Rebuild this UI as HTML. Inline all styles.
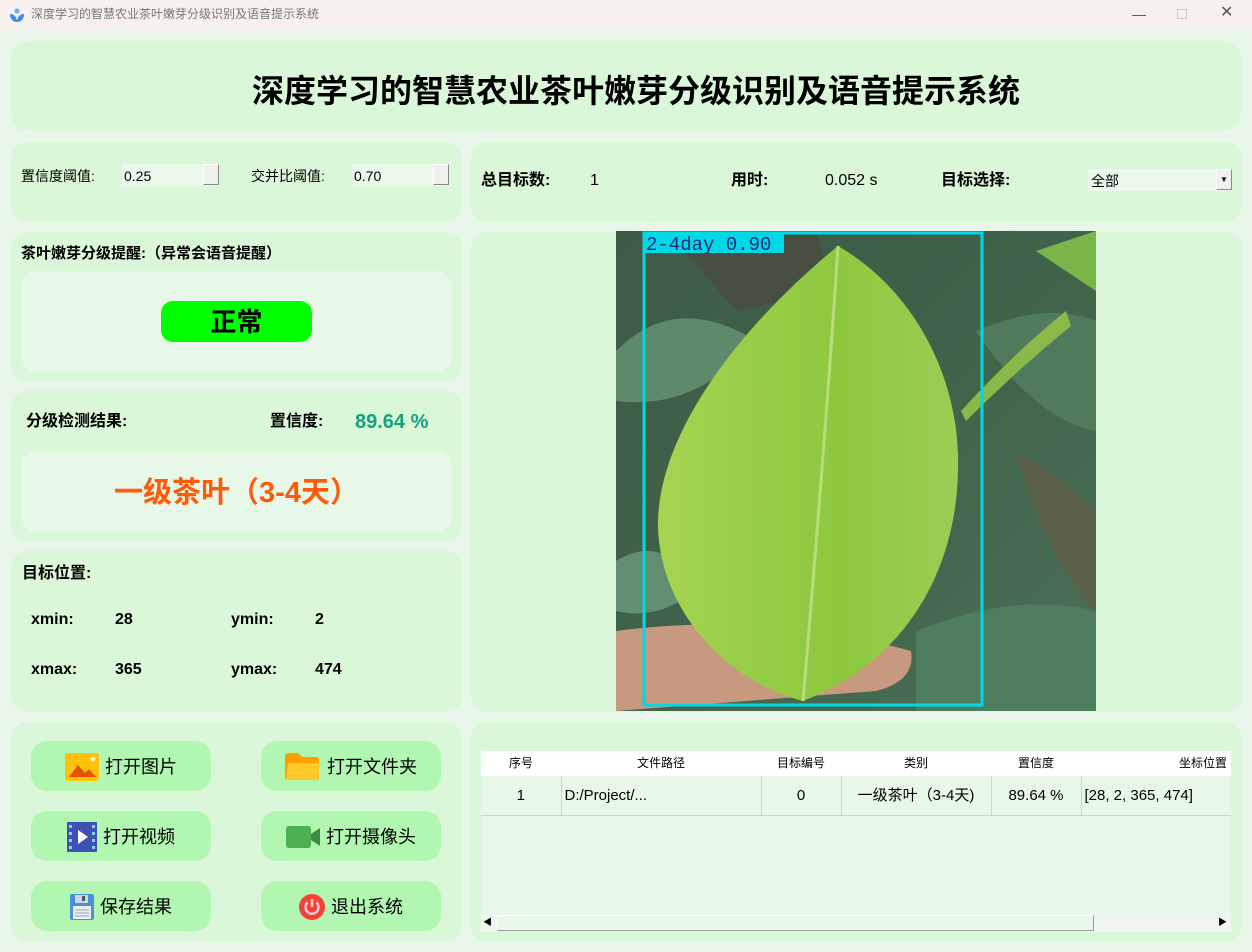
<!DOCTYPE html>
<html><head><meta charset="utf-8"><style>
*{box-sizing:border-box;margin:0;padding:0}
body{width:1252px;height:952px;background:#e9f7ea;font-family:"Liberation Sans","Noto Sans CJK SC",sans-serif;position:relative;overflow:hidden;line-height:1.15}
.a{position:absolute}
.p{position:absolute;background:#dbf7d9;border-radius:16px}
.in{position:absolute;background:#e8f8e8;border-radius:16px}
.b{font-weight:bold}
.btn{position:absolute;width:180px;height:50px;background:#b1f7b1;border-radius:16px;font-size:18px;display:flex;align-items:center;justify-content:center;gap:6px;color:#000;padding-top:2px}
.spin{position:absolute;width:97px;height:22px;background:#eaf9ea;font-size:14px;padding:4px 2px 0}
.spin i{position:absolute;right:0;top:0;width:16px;height:21px;border:1px solid #888;border-top-color:#fff;border-left-color:#fff;background:#f0f0f0}
th,td{font-weight:normal}
</style></head><body>
<div class="a" style="left:0;top:0;width:1252px;height:30px;background:#f6f1ef"></div>
<svg class="a" style="left:9px;top:7px" width="16" height="16" viewBox="0 0 16 16"><path d="M8 15C4 15 1 12 1 7c4 0 7 3 7 8z" fill="#3b8de0"/><path d="M8 15c4 0 7-3 7-8-4 0-7 3-7 8z" fill="#3b8de0"/><circle cx="8" cy="4" r="2.5" fill="#6ab0f0"/></svg>
<div class="a" style="left:31px;top:8px;font-size:12px;color:#777">深度学习的智慧农业茶叶嫩芽分级识别及语音提示系统</div>
<div class="a" style="left:1132px;top:6px;font-size:14px;color:#555">—</div>
<div class="a" style="left:1177px;top:9px;width:10px;height:10px;border:1px solid #ccc"></div>
<div class="a" style="left:1220px;top:4px;font-size:16px;color:#555">✕</div>

<div class="p" style="left:11px;top:41px;width:1230px;height:90px"></div>
<div class="a b" style="left:11px;width:1250px;top:73px;text-align:center;font-size:32px">深度学习的智慧农业茶叶嫩芽分级识别及语音提示系统</div>

<div class="p" style="left:11px;top:142px;width:451px;height:80px"></div>
<div class="a" style="left:21px;top:168px;font-size:14px">置信度阈值:</div>
<div class="spin" style="left:122px;top:164px">0.25<i></i></div>
<div class="a" style="left:251px;top:168px;font-size:14px">交并比阈值:</div>
<div class="spin" style="left:352px;top:164px">0.70<i></i></div>

<div class="p" style="left:471px;top:142px;width:771px;height:80px"></div>
<div class="a b" style="left:481px;top:172px;font-size:16px">总目标数:</div>
<div class="a" style="left:590px;top:172px;font-size:16px">1</div>
<div class="a b" style="left:731px;top:172px;font-size:16px">用时:</div>
<div class="a" style="left:825px;top:172px;font-size:16px">0.052 s</div>
<div class="a b" style="left:941px;top:172px;font-size:16px">目标选择:</div>
<div class="a" style="left:1088px;top:169px;width:144px;height:22px;background:#eaf9ea;font-size:14px;padding:4px 3px 0">全部<i style="position:absolute;right:0;top:0;width:16px;height:21px;border:1px solid #888;border-top-color:#fff;border-left-color:#fff;background:#f0f0f0;font-size:8px;text-align:center;line-height:20px;font-style:normal">▼</i></div>

<div class="p" style="left:11px;top:232px;width:451px;height:150px"></div>
<div class="a b" style="left:21px;top:245px;font-size:15px">茶叶嫩芽分级提醒:（异常会语音提醒）</div>
<div class="in" style="left:21px;top:271px;width:431px;height:101px"></div>
<div class="a b" style="left:161px;top:301px;width:151px;height:41px;background:#00ff00;border-radius:12px;text-align:center;font-size:26px;line-height:43px">正常</div>

<div class="p" style="left:11px;top:391px;width:451px;height:151px"></div>
<div class="a b" style="left:26px;top:413px;font-size:16px">分级检测结果:</div>
<div class="a b" style="left:270px;top:413px;font-size:16px">置信度:</div>
<div class="a b" style="left:355px;top:411px;font-size:20px;color:#13a27a">89.64 %</div>
<div class="in" style="left:21px;top:451px;width:431px;height:81px"></div>
<div class="a b" style="left:21px;width:431px;top:477px;text-align:center;font-size:29px;color:#ff5a0a">一级茶叶（3-4天）</div>

<div class="p" style="left:11px;top:551px;width:451px;height:161px"></div>
<div class="a b" style="left:22px;top:565px;font-size:16px">目标位置:</div>
<div class="a b" style="left:31px;top:611px;font-size:16px">xmin:</div>
<div class="a b" style="left:115px;top:611px;font-size:16px">28</div>
<div class="a b" style="left:231px;top:611px;font-size:16px">ymin:</div>
<div class="a b" style="left:315px;top:611px;font-size:16px">2</div>
<div class="a b" style="left:31px;top:661px;font-size:16px">xmax:</div>
<div class="a b" style="left:115px;top:661px;font-size:16px">365</div>
<div class="a b" style="left:231px;top:661px;font-size:16px">ymax:</div>
<div class="a b" style="left:315px;top:661px;font-size:16px">474</div>

<div class="p" style="left:471px;top:232px;width:771px;height:480px"></div>
<svg class="a" style="left:616px;top:231px" width="480" height="480" viewBox="0 0 480 480">
<defs><linearGradient id="bg" x1="0" y1="0" x2="1" y2="1"><stop offset="0" stop-color="#3d5a45"/><stop offset=".5" stop-color="#41634a"/><stop offset="1" stop-color="#4a7058"/></linearGradient>
<linearGradient id="lf" x1="0" y1="0" x2="1" y2="0"><stop offset="0" stop-color="#a6d451"/><stop offset=".6" stop-color="#8cc83e"/><stop offset="1" stop-color="#9ccd55"/></linearGradient></defs>
<rect width="480" height="480" fill="url(#bg)"/>
<path d="M60 10 L200 0 L220 60 L120 80Z" fill="#4e4640" opacity=".6"/>
<path d="M0 120 Q60 60 140 110 Q80 180 0 170Z" fill="#5c8a6a"/>
<path d="M0 330 Q50 300 80 360 Q40 390 0 380Z" fill="#628f72"/>
<path d="M300 400 Q400 360 480 380 L480 480 L300 480Z" fill="#4f7d60"/>
<path d="M360 100 Q430 70 480 90 L480 200 Q420 190 360 100Z" fill="#4f7a5c"/>
<path d="M400 220 Q450 250 480 280 L480 380 Q430 330 400 220Z" fill="#6b5a48" opacity=".6"/>
<path d="M420 20 L480 0 L480 60Z" fill="#7ab64a"/>
<path d="M345 180 Q400 120 450 80 L455 95 Q400 140 350 190Z" fill="#8ab84a"/>
<path d="M0 400 Q150 380 295 420 Q300 450 260 460 L0 480Z" fill="#c79a80"/>
<path d="M222 15 C300 60 345 150 342 240 C340 340 290 430 187 470 C110 450 45 380 42 297 C40 200 130 90 222 15Z" fill="url(#lf)"/>
<path d="M222 15 Q210 200 187 470" stroke="#b8dc7a" stroke-width="3" fill="none"/>
<rect x="28" y="2" width="338" height="472" fill="none" stroke="#00d8e6" stroke-width="3"/>
<rect x="28" y="2" width="140" height="20" fill="#00d8e6"/>
<text x="30" y="19" font-family="Liberation Mono,monospace" font-size="19" fill="#1a2a80">2-4day 0.90</text>
</svg>

<div class="p" style="left:11px;top:722px;width:451px;height:220px"></div>
<div class="btn" style="left:31px;top:741px"><svg width="34" height="28" viewBox="0 0 34 28"><rect width="34" height="28" rx="3" fill="#ffc107"/><path d="M4 24 L13 12 L20 20 L24 16 L31 24Z" fill="#e65100"/><circle cx="28" cy="6" r="2.5" fill="#fff3c0"/></svg>打开图片</div>
<div class="btn" style="left:261px;top:741px"><svg width="36" height="28" viewBox="0 0 36 28"><path d="M0 3 Q0 0 3 0 H13 L17 4 H32 Q34 4 34 7 V26 H0Z" fill="#ffa000"/><path d="M3 10 H35 L33 27 H1Z" fill="#ffca28"/></svg>打开文件夹</div>
<div class="btn" style="left:31px;top:811px"><svg width="30" height="30" viewBox="0 0 30 30"><rect width="30" height="30" fill="#3f51b5"/><g fill="#8bd4e8"><rect x="2" y="3" width="3" height="3"/><rect x="2" y="10" width="3" height="3"/><rect x="2" y="17" width="3" height="3"/><rect x="2" y="24" width="3" height="3"/><rect x="25" y="3" width="3" height="3"/><rect x="25" y="10" width="3" height="3"/><rect x="25" y="17" width="3" height="3"/><rect x="25" y="24" width="3" height="3"/></g><path d="M11 8 L21 15 L11 22Z" fill="#fff"/></svg>打开视频</div>
<div class="btn" style="left:261px;top:811px"><svg width="34" height="22" viewBox="0 0 34 22"><rect width="25" height="22" rx="3" fill="#4caf50"/><path d="M25 8 L34 2 V20 L25 14Z" fill="#388e3c"/></svg>打开摄像头</div>
<div class="btn" style="left:31px;top:881px"><svg width="24" height="26" viewBox="0 0 24 26"><rect width="24" height="26" rx="2" fill="#4a90d9"/><rect x="5" y="1" width="13" height="8" fill="#cfd8dc"/><rect x="12" y="2" width="3" height="5" fill="#455a64"/><rect x="3" y="12" width="18" height="13" fill="#eceff1"/><path d="M5 16h14M5 19h14M5 22h14" stroke="#90a4ae"/></svg>保存结果</div>
<div class="btn" style="left:261px;top:881px"><svg width="26" height="26" viewBox="0 0 26 26"><circle cx="13" cy="13" r="13" fill="#f44336"/><path d="M8.5 8.5 A6.5 6.5 0 1 0 17.5 8.5" stroke="#ffcdd2" stroke-width="2.5" fill="none"/><path d="M13 5 V13" stroke="#ffcdd2" stroke-width="2.5"/></svg>退出系统</div>

<div class="p" style="left:471px;top:722px;width:771px;height:220px"></div>
<div class="a" style="left:481px;top:751px;width:750px;height:180px;background:#e8f8e8"></div>
<table class="a" style="left:481px;top:751px;width:750px;border-collapse:collapse;font-size:12px;table-layout:fixed">
<tr style="background:#fff;height:25px"><th style="width:80px">序号</th><th style="width:200px">文件路径</th><th style="width:80px">目标编号</th><th style="width:150px">类别</th><th style="width:90px">置信度</th><th style="width:150px;text-align:right;padding-right:4px">坐标位置</th></tr>
<tr style="height:39px;font-size:15px;border-bottom:1px solid #c8d8c8"><td style="text-align:center;border-right:1px solid #c8d8c8">1</td><td style="border-right:1px solid #c8d8c8;padding-left:3px">D:/Project/...</td><td style="text-align:center;border-right:1px solid #c8d8c8">0</td><td style="text-align:center;border-right:1px solid #c8d8c8">一级茶叶（3-4天)</td><td style="text-align:center;border-right:1px solid #c8d8c8">89.64 %</td><td style="padding-left:3px">[28, 2, 365, 474]</td></tr>
</table>
<div class="a" style="left:481px;top:915px;width:750px;height:17px;background:#f0f5f0"></div>
<div class="a" style="left:497px;top:915px;width:597px;height:16px;background:#eaf8ea;border:1px solid #999;border-top-color:#fff;border-left-color:#fff"></div>
<div class="a" style="left:483px;top:917px;font-size:9px">◀</div>
<div class="a" style="left:1218px;top:917px;font-size:9px">▶</div>
</body></html>
